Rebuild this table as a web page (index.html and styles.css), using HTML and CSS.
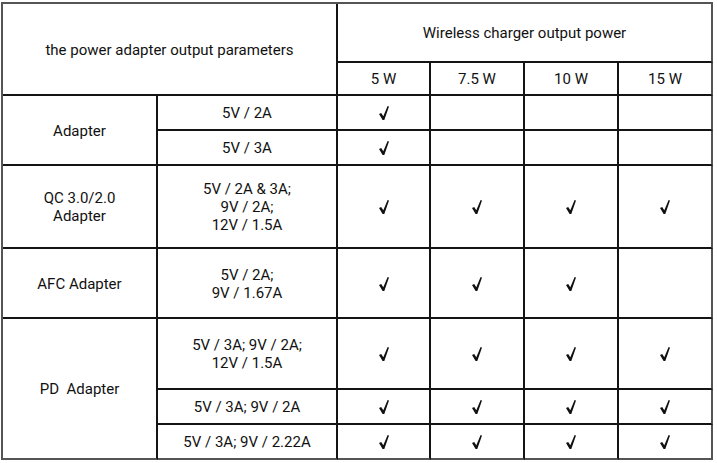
FILE: index.html
```html
<!DOCTYPE html>
<html lang="en">
<head>
<meta charset="utf-8">
<title>Adapter compatibility</title>
<link rel="stylesheet" href="styles.css">
</head>
<body>
<svg width="0" height="0" class="defs" aria-hidden="true">
  <defs>
    <symbol id="chk" viewBox="0 0 10 14">
      <path d="M0 8.1 L2.2 6.9 L4.3 10.3 L8.6 0 L10 0.5 L5.3 14 L3.6 14 Z"/>
    </symbol>
  </defs>
</svg>
<div class="grid">
  <div class="c h-params">the power adapter output parameters</div>
  <div class="c h-wireless lc">Wireless charger output power</div>
  <div class="c">5 W</div>
  <div class="c">7.5 W</div>
  <div class="c">10 W</div>
  <div class="c lc">15 W</div>

  <div class="c r-adapter">Adapter</div>
  <div class="c">5V / 2A</div>
  <div class="c"><svg class="ck"><use href="#chk"/></svg></div>
  <div class="c"></div>
  <div class="c"></div>
  <div class="c lc"></div>

  <div class="c">5V / 3A</div>
  <div class="c"><svg class="ck"><use href="#chk"/></svg></div>
  <div class="c"></div>
  <div class="c"></div>
  <div class="c lc"></div>

  <div class="c">QC 3.0/2.0<br>Adapter</div>
  <div class="c">5V / 2A &amp; 3A;<br>9V / 2A;<br>12V / 1.5A</div>
  <div class="c"><svg class="ck"><use href="#chk"/></svg></div>
  <div class="c"><svg class="ck"><use href="#chk"/></svg></div>
  <div class="c"><svg class="ck"><use href="#chk"/></svg></div>
  <div class="c lc"><svg class="ck"><use href="#chk"/></svg></div>

  <div class="c">AFC Adapter</div>
  <div class="c">5V / 2A;<br>9V / 1.67A</div>
  <div class="c"><svg class="ck"><use href="#chk"/></svg></div>
  <div class="c"><svg class="ck"><use href="#chk"/></svg></div>
  <div class="c"><svg class="ck"><use href="#chk"/></svg></div>
  <div class="c lc"></div>

  <div class="c r-pd lr">PD&nbsp; Adapter</div>
  <div class="c">5V / 3A; 9V / 2A;<br>12V / 1.5A</div>
  <div class="c"><svg class="ck"><use href="#chk"/></svg></div>
  <div class="c"><svg class="ck"><use href="#chk"/></svg></div>
  <div class="c"><svg class="ck"><use href="#chk"/></svg></div>
  <div class="c lc"><svg class="ck"><use href="#chk"/></svg></div>

  <div class="c">5V / 3A; 9V / 2A</div>
  <div class="c"><svg class="ck"><use href="#chk"/></svg></div>
  <div class="c"><svg class="ck"><use href="#chk"/></svg></div>
  <div class="c"><svg class="ck"><use href="#chk"/></svg></div>
  <div class="c lc"><svg class="ck"><use href="#chk"/></svg></div>

  <div class="c lr">5V / 3A; 9V / 2.22A</div>
  <div class="c lr"><svg class="ck"><use href="#chk"/></svg></div>
  <div class="c lr"><svg class="ck"><use href="#chk"/></svg></div>
  <div class="c lr"><svg class="ck"><use href="#chk"/></svg></div>
  <div class="c lc lr"><svg class="ck"><use href="#chk"/></svg></div>
</div>
</body>
</html>
```

FILE: styles.css
```css
html, body {
  margin: 0;
  padding: 0;
  background: #ffffff;
}
body {
  padding: 2px 0 0 1px;
  font-family: Roboto, "Liberation Sans", sans-serif;
  font-size: 15px;
  line-height: 18px;
  color: #111111;
}
.defs {
  position: absolute;
  width: 0;
  height: 0;
}
.grid {
  display: grid;
  width: 712px;
  box-sizing: border-box;
  grid-template-columns: 155px 180px 93px 94px 94px 94px;
  grid-template-rows: 59px 33px 35px 35px 83px 70px 71px 35px 35px;
  border-top: 2px solid #555;
  border-left: 2px solid #555;
}
.c {
  box-sizing: border-box;
  border-right: 2px solid #141414;
  border-bottom: 2px solid #141414;
  display: flex;
  align-items: center;
  justify-content: center;
  text-align: center;
  padding-top: 1px;
}
.lc { border-right-color: #555; }
.lr { border-bottom-color: #555; }
.h-params {
  grid-column: 1 / 3;
  grid-row: 1 / 3;
}
.h-wireless {
  grid-column: 3 / 7;
}
.r-adapter {
  grid-row: 3 / 5;
}
.r-pd {
  grid-row: 7 / 10;
}
.ck {
  width: 10px;
  height: 14px;
  fill: #111;
}
```
